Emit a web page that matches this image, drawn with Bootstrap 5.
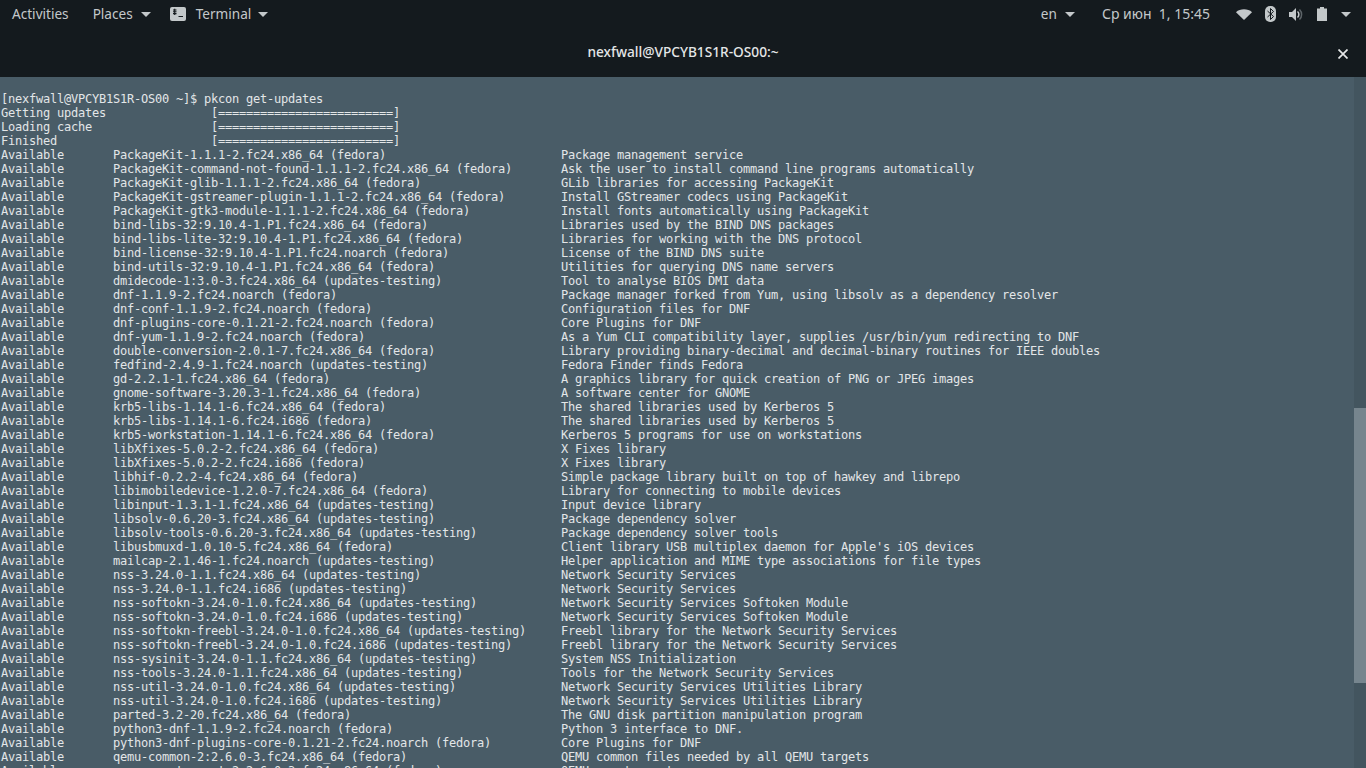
<!DOCTYPE html>
<html lang="en">
<head>
<meta charset="utf-8">
<title>Terminal</title>
<link rel="stylesheet" href="https://cdn.jsdelivr.net/npm/bootstrap@5.3.0/dist/css/bootstrap.min.css">
<style>
html, body { height: 100%; overflow: hidden; background: #141a1e; }
.shell-top { height: 28px; background: #141a1e; color: #c3c8ca; font-family: "Noto Sans", "Open Sans", sans-serif; font-size: 13.6px; line-height: 28px; }
.shell-item { white-space: pre; }
.caret-down { flex-shrink: 0; width: 0; height: 0; border-left: 5px solid transparent; border-right: 5px solid transparent; border-top: 5px solid #c3c8ca; }
.gap-caret { gap: 8px; }
.gap-icons { gap: 13px; }
.m-term { margin-left: 19px; }
.m-term-label { margin-right: 10px; }
.m-term-caret { margin-left: 7px; }
.m-status-caret { margin-left: 1px; }
.m-date { margin-left: 27px; font-size: 14px; }
.m-status { margin-left: 26px; margin-right: 15px; }
.title-strip { height: 49px; background: #141a1e; color: #e4e6e7; font-family: "Noto Sans", "Open Sans", sans-serif; font-size: 13.7px; font-weight: 500; }
.close-x { right: 18px; top: 21px; }
.term-wrap { height: 691px; background: #495c67; overflow: hidden; }
.term-text { margin: 0; padding: 15px 0 0 1px; font-family: "DejaVu Sans Mono", monospace; font-size: 12px; letter-spacing: -0.224px; line-height: 14px; color: #e3e6e8; overflow: visible; flex-grow: 1; }
.scroll-track { width: 12px; background: #43555f; }
.scroll-thumb { height: 275px; margin-top: 331px; background: #76858e; }
</style>
</head>
<body>
<div class="shell-top d-flex align-items-center">
  <span class="shell-item ms-2 ps-1">Activities</span>
  <span class="shell-item d-flex align-items-center gap-caret ms-4"><span>Places</span><span class="caret-down"></span></span>
  <span class="shell-item d-flex align-items-center m-term">
    <svg width="16" height="14" viewBox="0 0 16 14" class="m-term-label"><rect width="16" height="14" rx="2" fill="#c3c8ca"/><path d="M3 3h3.500M3 4.800h3.500M3 6.600h3.500M4.700 1.800v6.200M8.500 9.500h4.500" stroke="#141a1e" stroke-width="1.100" fill="none"/></svg>
    <span>Terminal</span><span class="caret-down m-term-caret"></span>
  </span>
  <span class="shell-item d-flex align-items-center gap-caret ms-auto"><span>en</span><span class="caret-down"></span></span>
  <span class="shell-item m-date">Ср июн  1, 15:45</span>
  <span class="d-flex align-items-center m-status gap-icons">
    <svg width="16" height="11" viewBox="0 0 16 11"><path d="M0 3.200C4 -.6 12 -.6 16 3.200L8 11Z" fill="#c3c8ca"/></svg>
    <svg width="11" height="16" viewBox="0 0 11 16"><rect width="11" height="16" rx="5" fill="#c3c8ca"/><path d="M2.500 5l6 5.500-3 3V2.500l3 3-6 5.500" stroke="#141a1e" fill="none"/></svg>
    <svg width="15" height="13" viewBox="0 0 15 13"><path d="M0 4h3l4-4v13l-4-4H0Z" fill="#c3c8ca"/><path d="M8.500 3.500a4 4 0 0 1 0 6" stroke="#c3c8ca" fill="none" stroke-width="1.500"/><path d="M10.500 1.500a7 7 0 0 1 0 10" stroke="#5d6468" fill="none" stroke-width="1.500"/></svg>
    <svg width="10" height="14" viewBox="0 0 10 14"><path d="M3 0h4v1.500h3V14H0V1.500h3Z" fill="#c3c8ca"/></svg>
    <span class="caret-down m-status-caret"></span>
  </span>
</div>
<div class="title-strip d-flex align-items-center justify-content-center position-relative">
  <span>nexfwall@VPCYB1S1R-OS00:~</span>
  <svg class="close-x position-absolute" width="10" height="10" viewBox="0 0 10 10"><path d="M.5 .5l9 9M9.500 .5l-9 9" stroke="#e4e6e7" stroke-width="1.700"/></svg>
</div>
<div class="term-wrap d-flex">
<pre class="term-text">[nexfwall@VPCYB1S1R-OS00 ~]$ pkcon get-updates
Getting updates               [=========================]
Loading cache                 [=========================]
Finished                      [=========================]
Available       PackageKit-1.1.1-2.fc24.x86_64 (fedora)                         Package management service
Available       PackageKit-command-not-found-1.1.1-2.fc24.x86_64 (fedora)       Ask the user to install command line programs automatically
Available       PackageKit-glib-1.1.1-2.fc24.x86_64 (fedora)                    GLib libraries for accessing PackageKit
Available       PackageKit-gstreamer-plugin-1.1.1-2.fc24.x86_64 (fedora)        Install GStreamer codecs using PackageKit
Available       PackageKit-gtk3-module-1.1.1-2.fc24.x86_64 (fedora)             Install fonts automatically using PackageKit
Available       bind-libs-32:9.10.4-1.P1.fc24.x86_64 (fedora)                   Libraries used by the BIND DNS packages
Available       bind-libs-lite-32:9.10.4-1.P1.fc24.x86_64 (fedora)              Libraries for working with the DNS protocol
Available       bind-license-32:9.10.4-1.P1.fc24.noarch (fedora)                License of the BIND DNS suite
Available       bind-utils-32:9.10.4-1.P1.fc24.x86_64 (fedora)                  Utilities for querying DNS name servers
Available       dmidecode-1:3.0-3.fc24.x86_64 (updates-testing)                 Tool to analyse BIOS DMI data
Available       dnf-1.1.9-2.fc24.noarch (fedora)                                Package manager forked from Yum, using libsolv as a dependency resolver
Available       dnf-conf-1.1.9-2.fc24.noarch (fedora)                           Configuration files for DNF
Available       dnf-plugins-core-0.1.21-2.fc24.noarch (fedora)                  Core Plugins for DNF
Available       dnf-yum-1.1.9-2.fc24.noarch (fedora)                            As a Yum CLI compatibility layer, supplies /usr/bin/yum redirecting to DNF
Available       double-conversion-2.0.1-7.fc24.x86_64 (fedora)                  Library providing binary-decimal and decimal-binary routines for IEEE doubles
Available       fedfind-2.4.9-1.fc24.noarch (updates-testing)                   Fedora Finder finds Fedora
Available       gd-2.2.1-1.fc24.x86_64 (fedora)                                 A graphics library for quick creation of PNG or JPEG images
Available       gnome-software-3.20.3-1.fc24.x86_64 (fedora)                    A software center for GNOME
Available       krb5-libs-1.14.1-6.fc24.x86_64 (fedora)                         The shared libraries used by Kerberos 5
Available       krb5-libs-1.14.1-6.fc24.i686 (fedora)                           The shared libraries used by Kerberos 5
Available       krb5-workstation-1.14.1-6.fc24.x86_64 (fedora)                  Kerberos 5 programs for use on workstations
Available       libXfixes-5.0.2-2.fc24.x86_64 (fedora)                          X Fixes library
Available       libXfixes-5.0.2-2.fc24.i686 (fedora)                            X Fixes library
Available       libhif-0.2.2-4.fc24.x86_64 (fedora)                             Simple package library built on top of hawkey and librepo
Available       libimobiledevice-1.2.0-7.fc24.x86_64 (fedora)                   Library for connecting to mobile devices
Available       libinput-1.3.1-1.fc24.x86_64 (updates-testing)                  Input device library
Available       libsolv-0.6.20-3.fc24.x86_64 (updates-testing)                  Package dependency solver
Available       libsolv-tools-0.6.20-3.fc24.x86_64 (updates-testing)            Package dependency solver tools
Available       libusbmuxd-1.0.10-5.fc24.x86_64 (fedora)                        Client library USB multiplex daemon for Apple's iOS devices
Available       mailcap-2.1.46-1.fc24.noarch (updates-testing)                  Helper application and MIME type associations for file types
Available       nss-3.24.0-1.1.fc24.x86_64 (updates-testing)                    Network Security Services
Available       nss-3.24.0-1.1.fc24.i686 (updates-testing)                      Network Security Services
Available       nss-softokn-3.24.0-1.0.fc24.x86_64 (updates-testing)            Network Security Services Softoken Module
Available       nss-softokn-3.24.0-1.0.fc24.i686 (updates-testing)              Network Security Services Softoken Module
Available       nss-softokn-freebl-3.24.0-1.0.fc24.x86_64 (updates-testing)     Freebl library for the Network Security Services
Available       nss-softokn-freebl-3.24.0-1.0.fc24.i686 (updates-testing)       Freebl library for the Network Security Services
Available       nss-sysinit-3.24.0-1.1.fc24.x86_64 (updates-testing)            System NSS Initialization
Available       nss-tools-3.24.0-1.1.fc24.x86_64 (updates-testing)              Tools for the Network Security Services
Available       nss-util-3.24.0-1.0.fc24.x86_64 (updates-testing)               Network Security Services Utilities Library
Available       nss-util-3.24.0-1.0.fc24.i686 (updates-testing)                 Network Security Services Utilities Library
Available       parted-3.2-20.fc24.x86_64 (fedora)                              The GNU disk partition manipulation program
Available       python3-dnf-1.1.9-2.fc24.noarch (fedora)                        Python 3 interface to DNF.
Available       python3-dnf-plugins-core-0.1.21-2.fc24.noarch (fedora)          Core Plugins for DNF
Available       qemu-common-2:2.6.0-3.fc24.x86_64 (fedora)                      QEMU common files needed by all QEMU targets
Available       qemu-guest-agent-2:2.6.0-3.fc24.x86_64 (fedora)                 QEMU guest agent
</pre>
  <div class="scroll-track flex-shrink-0"><div class="scroll-thumb"></div></div>
</div>
</body>
</html>
